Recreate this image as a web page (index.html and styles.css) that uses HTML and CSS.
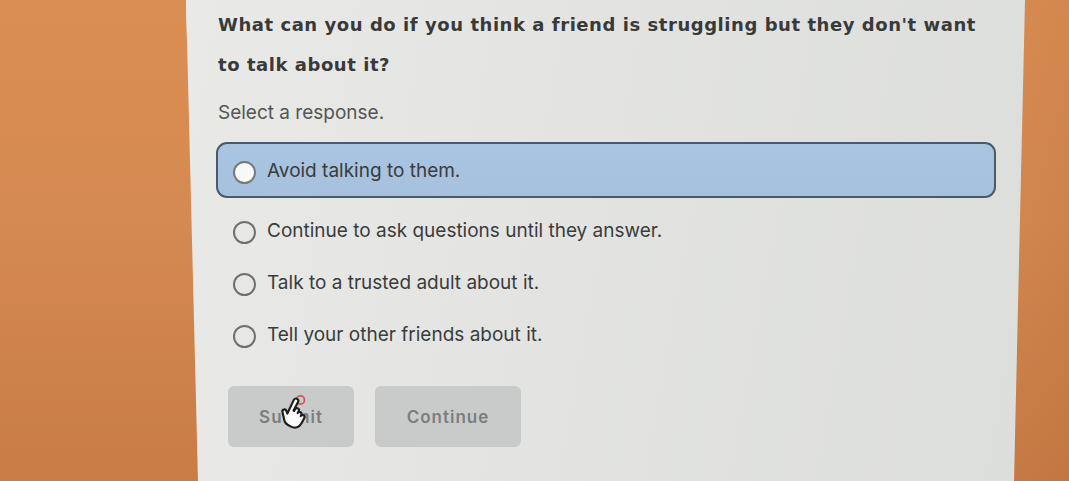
FILE: index.html
```html
<!DOCTYPE html>
<html lang="en">
<head>
<meta charset="utf-8">
<title>Question</title>
<link rel="stylesheet" href="styles.css">
</head>
<body>
<div class="screen">
  <div class="quiz">
    <h1 class="question">What can you do if you think a friend is struggling but they don't want to talk about it?</h1>
    <p class="prompt">Select a response.</p>
    <div class="options">
      <label class="option selected"><span class="radio"></span><span class="label">Avoid talking to them.</span></label>
      <label class="option"><span class="radio"></span><span class="label">Continue to ask questions until they answer.</span></label>
      <label class="option"><span class="radio"></span><span class="label">Talk to a trusted adult about it.</span></label>
      <label class="option"><span class="radio"></span><span class="label">Tell your other friends about it.</span></label>
    </div>
    <div class="actions">
      <button class="btn submit">Submit
        <svg class="cursor" viewBox="0 0 30 30" width="36" height="36">
          <circle cx="22" cy="5" r="3.4" fill="none" stroke="#d5555a" stroke-width="1.5"/>
          <g transform="rotate(28 14 16)">
            <path d="M11 5a2 2 0 0 1 4 0v8h.6v-1.6a1.7 1.7 0 0 1 3.4 0v1.8a1.7 1.7 0 0 1 3.4 0v1a1.7 1.7 0 0 1 3.4 0v5c0 3.6-2.4 6.6-6.4 6.6h-3.2c-2 0-3.2-1-4.3-2.2l-4.5-5.2a1.7 1.7 0 0 1 2.4-2.4l1.8 1.6z" fill="#fbfbfb" stroke="#1e1e1e" stroke-width="1.8" stroke-linejoin="round"/>
          </g>
        </svg>
      </button>
      <button class="btn">Continue</button>
    </div>
  </div>
</div>
</body>
</html>
```

FILE: styles.css
```css
html, body {
  margin: 0;
  height: 100%;
}

body {
  width: 1069px;
  height: 481px;
  overflow: hidden;
  background:
    linear-gradient(90deg, rgba(0,0,0,0) 0%, rgba(0,0,0,0) 90%, rgba(120,50,10,0.08) 100%),
    linear-gradient(180deg, #db8e53 0%, #d58a51 45%, #c97c46 100%);
  font-family: "Inter", "Liberation Sans", sans-serif;
}

/* the monitor area, slightly keystoned */
.screen {
  margin-left: 184px;
  width: 843px;
  height: 481px;
  background: linear-gradient(100deg, #e9eae7 0%, #e3e4e2 45%, #dcdedc 100%);
  clip-path: polygon(2px 0, 841px 0, 830px 481px, 14px 481px);
  box-shadow: inset 3px 0 0 #eeeeea;
}

.quiz {
  padding: 5px 0 0 32px;
}

.question {
  margin: 0;
  padding-left: 2px;
  width: 765px;
  font-family: "DejaVu Sans", "Inter", sans-serif;
  font-size: 18px;
  font-weight: 700;
  line-height: 40px;
  color: #383a3a;
  letter-spacing: 0.55px;
}

.prompt {
  margin: 16px 0 0 2px;
  font-size: 19px;
  line-height: 24px;
  color: #535555;
}

.options {
  margin-top: 17px;
  display: flex;
  flex-direction: column;
}

.option {
  display: flex;
  align-items: center;
  box-sizing: border-box;
  width: 780px;
  height: 52px;
  padding-left: 15px;
  border: 2px solid transparent;
  border-radius: 11px;
}

.option.selected {
  height: 56px;
  margin-bottom: 6px;
  background: linear-gradient(180deg, #a9c5e1 0%, #a6c1dd 100%);
  border-color: #4c5a68;
}

.radio {
  flex: none;
  width: 19px;
  height: 19px;
  border: 2px solid #6e7070;
  border-radius: 50%;
  margin-top: 4px;
}

.selected .radio {
  background: #f7f8f8;
  border-color: #767a7e;
}

.label {
  margin-left: 11px;
  font-size: 19px;
  color: #3a3c3c;
  letter-spacing: 0;
}

.actions {
  display: flex;
  gap: 21px;
  margin: 26px 0 0 12px;
}

.btn {
  position: relative;
  height: 61px;
  width: 126px;
  border: 0;
  border-radius: 6px;
  background: #c9cbca;
  font-family: "Inter", "Liberation Sans", sans-serif;
  font-size: 17px;
  font-weight: 600;
  color: #7b7e7e;
  letter-spacing: 1px;
}

.btn + .btn {
  width: 146px;
}

.cursor {
  position: absolute;
  left: 46px;
  top: 8px;
}
```
